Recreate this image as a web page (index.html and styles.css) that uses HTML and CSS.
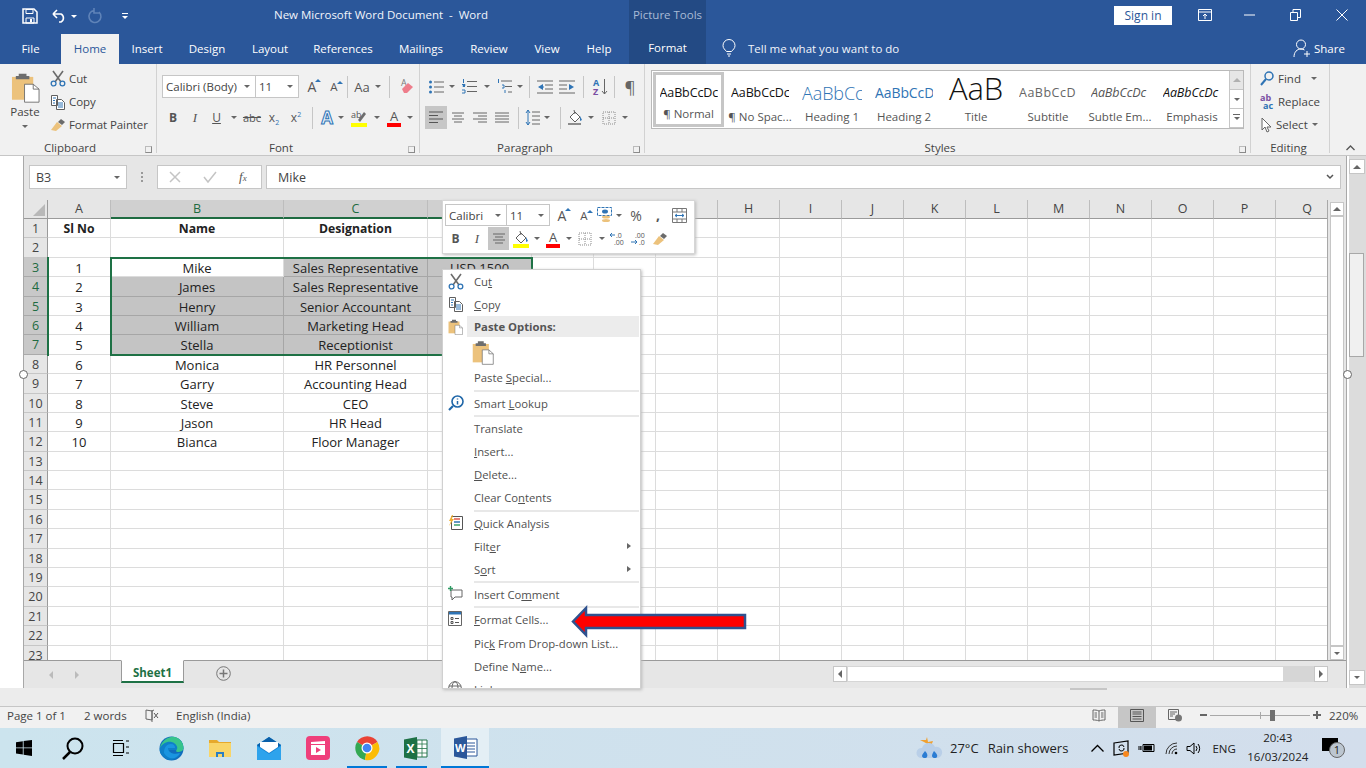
FILE: index.html
```html
<!doctype html>
<html>
<head>
  <meta charset="utf-8">
  <title>New Microsoft Word Document - Word</title>
  <link rel="stylesheet" href="styles.css">
</head>
<body>
<svg class="defs" width="0" height="0">
  <symbol id="paste" viewBox="0 0 30 38" preserveAspectRatio="none">
    <path d="M1 6h22v28H1z" fill="#ecc27c"/><path d="M8 5V2h8v3h3v4H5V5z" fill="#6d6d6d"/>
    <path d="M14 15h9l6 6v16H14z" fill="#fff" stroke="#6b6b6b"/><path d="M23 15v6h6" fill="none" stroke="#6b6b6b"/>
  </symbol>
  <symbol id="scissors" viewBox="0 0 16 17">
    <path d="M3 1l8 11M13 1L5 12" stroke="#6b6b6b" stroke-width="1.6" fill="none"/>
    <circle cx="3.6" cy="13.5" r="2.4" fill="none" stroke="#2f74b5" stroke-width="1.3"/><circle cx="12.4" cy="13.5" r="2.4" fill="none" stroke="#2f74b5" stroke-width="1.3"/>
  </symbol>
  <symbol id="copy" viewBox="0 0 16 16">
    <path d="M1.5 1.5h6v10h-6zM6.500 5.500h5l3 3v7h-8z" fill="#fff" stroke="#5f5f5f"/>
    <path d="M3 4h3M3 6.500h2M3 9h2M8 9h5M8 11h5M8 13h5" stroke="#2f74b5"/>
  </symbol>
  <symbol id="painter" viewBox="0 0 16 14">
    <path d="M1 12L7 4l5 4-6 5z" fill="#ecc27c"/><path d="M8 4l3-3 4 3-3 3z" fill="#6b6b6b"/>
  </symbol>
  <symbol id="fill" viewBox="0 0 16 18">
    <path d="M3 8l5-5 5 5-5 5z" fill="#fff" stroke="#5f5f5f"/><path d="M7 1l1 4" stroke="#5f5f5f"/><path d="M13 7l2 4-2 1z" fill="#2f74b5"/>
    <path d="M1 15h13" stroke="#8c8c8c" stroke-width="2"/>
  </symbol>
  <symbol id="borders" viewBox="0 0 14 14">
    <path d="M1 1h12v12H1zM7 1v12M1 7h12" fill="none" stroke="#8c8c8c" stroke-dasharray="1 1"/>
  </symbol>
  <symbol id="center" viewBox="0 0 14 12">
    <path d="M1 1h12M3 4h8M1 7h12M3 10h8" stroke="#666" fill="none"/>
  </symbol>
</svg>

<div class="screen">
  <header class="titlebar">
    <div class="qat">
      <svg width="16" height="16" viewBox="0 0 16 16"><path d="M1 1h11l3 3v11H1z" fill="none" stroke="#fff" stroke-width="1.500"/><path d="M4 1.500h7v4H4zM4 10h8v5H4z" fill="none" stroke="#fff"/><path d="M8 11h2v3H8z" fill="#fff"/></svg>
      <svg class="undo" width="15" height="14" viewBox="0 0 15 14"><path d="M1 5l4-4M1 5l4 4M1 5h8a4.500 4.500 0 0 1 0 8H7" fill="none" stroke="#fff" stroke-width="1.600"/></svg>
      <i class="v white undoarrow"></i>
      <svg class="redo" width="14" height="16" viewBox="0 0 14 16"><path d="M11 4a6 6 0 1 1-5-1.500M6 0v5h5" fill="none" stroke="#5f83b8" stroke-width="1.600"/></svg>
      <span class="customize"><b></b><i class="v white"></i></span>
    </div>
    <div class="doctitle">New Microsoft Word Document &nbsp;-&nbsp; Word</div>
    <div class="picturetools">Picture Tools</div>
    <div class="winbtns">
      <button class="signin">Sign in</button>
      <svg class="ribbonopt" width="14" height="12" viewBox="0 0 14 12"><path d="M.5.500h13v11H.5zM.5 3h13M7 10V5M5 7l2-2 2 2" fill="none" stroke="#fff"/></svg>
      <svg class="minbtn" width="11" height="2" viewBox="0 0 11 2"><path d="M0 1h11" stroke="#fff"/></svg>
      <svg class="maxbtn" width="11" height="12" viewBox="0 0 11 12"><path d="M.5 3.500h7v8h-7zM3 3V.5h7.500v8H8" fill="none" stroke="#fff"/></svg>
      <svg class="closebtn" width="12" height="12" viewBox="0 0 12 12"><path d="M.5.500l11 11M11.500.500l-11 11" stroke="#fff"/></svg>
    </div>
  </header>

  <nav class="tabs">
    <span>File</span><span class="current">Home</span><span>Insert</span><span>Design</span><span>Layout</span><span>References</span><span>Mailings</span><span>Review</span><span>View</span><span>Help</span><span></span><span class="formattab">Format</span>
    <span class="tellme">
      <svg width="14" height="18" viewBox="0 0 14 18"><path d="M4.500 12.500C3 10.500 1 9.500 1 6.500a6 6 0 0 1 12 0c0 3-2 4-3.500 6zM5 15h4M6 17h2" fill="none" stroke="#fff"/></svg>
      Tell me what you want to do
    </span>
    <span class="share">
      <svg width="18" height="19" viewBox="0 0 18 19"><circle cx="8" cy="5.500" r="4.500" fill="none" stroke="#fff"/><path d="M1 18c0-5 3-8 7-8 1.500 0 2.500.5 3.500 1M14 12v6M11 15h6" fill="none" stroke="#fff"/></svg>
      Share
    </span>
  </nav>

  <section class="ribbon">
    <div class="group clipboard">
      <div class="clipbody">
        <div class="pastebtn">
          <svg width="29" height="31"><use href="#paste"/></svg>
          <span>Paste</span>
          <i class="v"></i>
        </div>
        <div class="cliplist">
          <div><svg width="16" height="17"><use href="#scissors"/></svg>Cut</div>
          <div><svg width="16" height="16"><use href="#copy"/></svg>Copy</div>
          <div><svg width="16" height="14"><use href="#painter"/></svg>Format Painter</div>
        </div>
      </div>
      <div class="grouplabel">Clipboard<i class="launcher"></i></div>
    </div>

    <div class="group font">
      <div class="rows">
        <div class="row fontrow1">
          <div class="combo">Calibri (Body)<i class="v"></i></div>
          <div class="combo size">11<i class="v"></i></div>
          <span class="bigA up">A</span>
          <span class="bigA small up">A</span>
          <i class="sep"></i>
          <span class="aa">Aa</span>
          <i class="v"></i>
          <i class="sep"></i>
          <svg width="15" height="17" viewBox="0 0 15 17"><text x="2" y="8" font-size="9" fill="#777" font-family="Open Sans">A</text><path d="M3 11l6-6 5 4-6 6H5z" fill="#ee7d8b"/></svg>
        </div>
        <div class="row fontrow2">
          <b class="fmt">B</b>
          <em class="fmt">I</em>
          <u class="fmt">U</u>
          <i class="v"></i>
          <s class="fmt abc">abc</s>
          <span class="fmt">x<sub>2</sub></span>
          <span class="fmt">x<sup>2</sup></span>
          <i class="sep"></i>
          <span class="texteffect">A</span>
          <i class="v"></i>
          <svg width="16" height="18" viewBox="0 0 16 18"><text x="0" y="9" font-size="9" fill="#555" font-family="Open Sans">ab</text><path d="M7 11l6-8 2 2-6 8z" fill="#6d6d6d"/><path d="M0 14h16v4H0z" fill="#ff0"/></svg>
          <i class="v"></i>
          <span class="fontcolor">A</span>
          <i class="v"></i>
        </div>
      </div>
      <div class="grouplabel">Font<i class="launcher"></i></div>
    </div>

    <div class="group paragraph">
      <div class="rows">
        <div class="row pararow1">
          <svg width="15" height="14" viewBox="0 0 15 14"><path d="M5 2h10M5 7h10M5 12h10" stroke="#666"/><circle cx="1.500" cy="2" r="1.500" fill="#2f74b5"/><circle cx="1.500" cy="7" r="1.500" fill="#2f74b5"/><circle cx="1.500" cy="12" r="1.500" fill="#2f74b5"/></svg>
          <i class="v"></i>
          <svg width="15" height="15" viewBox="0 0 15 15"><path d="M5 2.500h10M5 7.500h10M5 12.500h10" stroke="#666"/><path d="M1.500 0v4M0 5.500h3v1H1v1h2M0 11h3v3H0" stroke="#2f74b5" fill="none"/></svg>
          <i class="v"></i>
          <svg width="15" height="15" viewBox="0 0 15 15"><path d="M4 2h11M8 7.500h7M11 13h4" stroke="#666"/><path d="M1.500 0v4M5 6h2v3H5M8 11v3" stroke="#2f74b5" fill="none"/></svg>
          <i class="v"></i>
          <i class="sep"></i>
          <svg width="16" height="14" viewBox="0 0 16 14"><path d="M0 1h16M8 5h8M8 9h8M0 13h16" stroke="#666"/><path d="M6 4L1 7l5 3zM6 6.500h1v1H6z" fill="#2f74b5"/></svg>
          <svg width="16" height="14" viewBox="0 0 16 14"><path d="M0 1h16M0 5h8M0 9h8M0 13h16" stroke="#666"/><path d="M10 4l5 3-5 3z" fill="#2f74b5"/></svg>
          <i class="sep"></i>
          <svg width="15" height="18" viewBox="0 0 15 18"><text x="0" y="8" font-size="9" font-weight="700" fill="#2f74b5" font-family="Open Sans">A</text><text x="0" y="17" font-size="9" font-weight="700" fill="#7a4fa3" font-family="Open Sans">Z</text><path d="M11.500 1v15M9 13l2.500 3 2.500-3" stroke="#666" fill="none"/></svg>
          <i class="sep"></i>
          <span class="pilcrow">&para;</span>
        </div>
        <div class="row pararow2">
          <svg class="activebtn" width="22" height="23" viewBox="0 0 22 23"><path d="M4 6h14M4 9.500h9M4 13h14M4 16.500h9" stroke="#555"/></svg>
          <svg width="14" height="12"><use href="#center"/></svg>
          <svg width="14" height="12" viewBox="0 0 14 12"><path d="M0 1h14M5 4h9M0 7h14M5 10h9" stroke="#666"/></svg>
          <svg width="14" height="12" viewBox="0 0 14 12"><path d="M0 1h14M0 4h14M0 7h14M0 10h14" stroke="#666"/></svg>
          <i class="sep"></i>
          <svg width="15" height="17" viewBox="0 0 15 17"><path d="M3 1v15M1 4l2-3 2 3M1 13l2 3 2-3" stroke="#2f74b5" fill="none"/><path d="M7 3h8M7 7h8M7 11h8M7 15h8" stroke="#666"/></svg>
          <i class="v"></i>
          <i class="sep"></i>
          <svg width="16" height="18"><use href="#fill"/></svg>
          <i class="v"></i>
          <svg width="14" height="14"><use href="#borders"/></svg>
          <i class="v"></i>
        </div>
      </div>
      <div class="grouplabel">Paragraph<i class="launcher"></i></div>
    </div>

    <div class="group styles">
      <div class="gallery">
        <div class="style selected"><p class="pv normal">AaBbCcDc</p><span>&para; Normal</span></div>
        <div class="style"><p class="pv normal">AaBbCcDc</p><span>&para; No Spac...</span></div>
        <div class="style"><p class="pv h1">AaBbCc</p><span>Heading 1</span></div>
        <div class="style"><p class="pv h2">AaBbCcD</p><span>Heading 2</span></div>
        <div class="style"><p class="pv titlepv">AaB</p><span>Title</span></div>
        <div class="style"><p class="pv subtitle">AaBbCcD</p><span>Subtitle</span></div>
        <div class="style"><p class="pv subtle">AaBbCcDc</p><span>Subtle Em...</span></div>
        <div class="style"><p class="pv emph">AaBbCcDc</p><span>Emphasis</span></div>
        <div class="galleryscroll">
          <div class="gup"><i class="vu"></i></div>
          <div><i class="v"></i></div>
          <div class="gmore"><i class="v"></i></div>
        </div>
      </div>
      <div class="grouplabel">Styles<i class="launcher"></i></div>
    </div>

    <div class="group editing">
      <div class="editlist">
        <div><svg width="14" height="15" viewBox="0 0 14 15"><circle cx="9" cy="5" r="4" fill="none" stroke="#2f74b5" stroke-width="1.500"/><path d="M6 8l-5 6" stroke="#2f74b5" stroke-width="2"/></svg>Find<i class="v"></i></div>
        <div><svg width="14" height="16" viewBox="0 0 14 16"><text x="0" y="7" font-size="9" font-weight="700" fill="#7a4fa3" font-family="Open Sans">ab</text><text x="3" y="15" font-size="9" font-weight="700" fill="#2f74b5" font-family="Open Sans">ac</text></svg>Replace</div>
        <div><svg width="12" height="16" viewBox="0 0 12 16"><path d="M2 1v12l3-3 2 5 2-1-2-4h4z" fill="#fff" stroke="#666"/></svg>Select<i class="v"></i></div>
      </div>
      <div class="grouplabel">Editing</div>
    </div>
    <svg class="collapse" width="9" height="6" viewBox="0 0 9 6"><path d="M.5 5l4-4 4 4" fill="none" stroke="#555" stroke-width="1.300"/></svg>
  </section>

  <main class="docarea">
    <div class="docrow">
      <div class="pagemargin"></div>
      <div class="excel">
        <div class="formulabar">
          <div class="namebox">B3<i class="v"></i></div>
          <span class="grip"></span>
          <div class="fxbox">
            <svg width="12" height="12" viewBox="0 0 12 12"><path d="M1 1l10 10M11 1L1 11" stroke="#c4c4c4" stroke-width="1.500"/></svg>
            <svg width="14" height="12" viewBox="0 0 14 12"><path d="M1 6l4 5 8-10" fill="none" stroke="#c4c4c4" stroke-width="1.500"/></svg>
            <em class="fx">f<small>x</small></em>
          </div>
          <div class="formula">Mike<svg width="8" height="6" viewBox="0 0 8 6"><path d="M1 1l3 3 3-3" fill="none" stroke="#555" stroke-width="1.500"/></svg></div>
        </div>

        <div class="sheetwrap">
          <div class="sheet">
            <div class="corner"><b></b></div><div class="ch">A</div><div class="ch on">B</div><div class="ch on">C</div><div class="ch on">D</div><div class="ch">E</div><div class="ch">F</div><div class="ch">G</div><div class="ch">H</div><div class="ch">I</div><div class="ch">J</div><div class="ch">K</div><div class="ch">L</div><div class="ch">M</div><div class="ch">N</div><div class="ch">O</div><div class="ch">P</div><div class="ch q">Q</div>

            <div class="rh">1</div><div class="c hd">Sl No</div><div class="c hd">Name</div><div class="c hd">Designation</div><div class="c"></div>
            <div class="rh">2</div><div class="c"></div><div class="c"></div><div class="c"></div><div class="c"></div>
            <div class="rh on">3</div><div class="c">1</div><div class="c">Mike</div><div class="c sel">Sales Representative</div><div class="c sel">USD 1500</div>
            <div class="rh on">4</div><div class="c">2</div><div class="c sel">James</div><div class="c sel">Sales Representative</div><div class="c sel"></div>
            <div class="rh on">5</div><div class="c">3</div><div class="c sel">Henry</div><div class="c sel">Senior Accountant</div><div class="c sel"></div>
            <div class="rh on">6</div><div class="c">4</div><div class="c sel">William</div><div class="c sel">Marketing Head</div><div class="c sel"></div>
            <div class="rh on">7</div><div class="c">5</div><div class="c sel">Stella</div><div class="c sel">Receptionist</div><div class="c sel"></div>
            <div class="rh">8</div><div class="c">6</div><div class="c">Monica</div><div class="c">HR Personnel</div><div class="c"></div>
            <div class="rh">9</div><div class="c">7</div><div class="c">Garry</div><div class="c">Accounting Head</div><div class="c"></div>
            <div class="rh">10</div><div class="c">8</div><div class="c">Steve</div><div class="c">CEO</div><div class="c"></div>
            <div class="rh">11</div><div class="c">9</div><div class="c">Jason</div><div class="c">HR Head</div><div class="c"></div>
            <div class="rh">12</div><div class="c">10</div><div class="c">Bianca</div><div class="c">Floor Manager</div><div class="c"></div>
            <div class="rh">13</div><div class="c"></div><div class="c"></div><div class="c"></div><div class="c"></div>
            <div class="rh">14</div><div class="c"></div><div class="c"></div><div class="c"></div><div class="c"></div>
            <div class="rh">15</div><div class="c"></div><div class="c"></div><div class="c"></div><div class="c"></div>
            <div class="rh">16</div><div class="c"></div><div class="c"></div><div class="c"></div><div class="c"></div>
            <div class="rh">17</div><div class="c"></div><div class="c"></div><div class="c"></div><div class="c"></div>
            <div class="rh">18</div><div class="c"></div><div class="c"></div><div class="c"></div><div class="c"></div>
            <div class="rh">19</div><div class="c"></div><div class="c"></div><div class="c"></div><div class="c"></div>
            <div class="rh">20</div><div class="c"></div><div class="c"></div><div class="c"></div><div class="c"></div>
            <div class="rh">21</div><div class="c"></div><div class="c"></div><div class="c"></div><div class="c"></div>
            <div class="rh">22</div><div class="c"></div><div class="c"></div><div class="c"></div><div class="c"></div>
            <div class="rh">23</div><div class="c"></div><div class="c"></div><div class="c"></div><div class="c"></div>
            <div class="selection"></div>
            <div class="rowmark"></div>
          </div>
          <div class="sheetscroll">
            <div class="arrowbtn"><i class="vu"></i></div>
            <div class="sheettrack"></div>
            <div class="arrowbtn"><i class="v"></i></div>
          </div>
        </div>

        <div class="sheettabs">
          <span class="navarrows"><i class="tl"></i><i class="tr"></i></span>
          <div class="sheettab">Sheet1</div>
          <svg class="addsheet" width="15" height="15" viewBox="0 0 15 15"><circle cx="7.500" cy="7.500" r="6.800" fill="none" stroke="#777"/><path d="M7.500 3.500v8M3.500 7.500h8" stroke="#777" stroke-width="1.500"/></svg>
          <div class="hscroll">
            <div class="arrowbtn"><i class="tl"></i></div>
            <div class="hthumb"></div>
            <div class="arrowbtn"><i class="tr"></i></div>
          </div>
        </div>
      </div>
      <div class="wordscroll">
        <div class="arrowbtn"><i class="vu"></i></div>
        <div class="wordtrack"><div class="wordthumb"></div></div>
        <div class="arrowbtn"><i class="v"></i></div>
      </div>
    </div>
    <div class="docfoot"><span></span></div>
  </main>

  <footer class="statusbar">
    <span class="pageinfo">Page 1 of 1</span>
    <span class="wordcount">2 words</span>
    <svg class="proof" width="14" height="13" viewBox="0 0 14 13"><path d="M7 11L1 10V1l6 1zM7 2l2-1M7 13V1" fill="none" stroke="#666"/><path d="M9 4l4 5M13 4L9 9" stroke="#555"/></svg>
    <span class="lang">English (India)</span>
    <div class="statusright">
      <svg width="14" height="13" viewBox="0 0 14 13"><path d="M7 2C5 1 3 1 1 1v10c2 0 4 0 6 1 2-1 4-1 6-1V1c-2 0-4 0-6 1zM7 2v10M2.500 4H5M2.500 6H5M2.500 8H5M9 4h2.500M9 6h2.500M9 8h2.500" fill="none" stroke="#666"/></svg>
      <span class="printview"><svg width="14" height="13" viewBox="0 0 14 13"><path d="M.5.500h13v12H.5zM2.500 3h9M2.500 5h9M2.500 7.500h9M2.500 10h9" fill="none" stroke="#555"/></svg></span>
      <svg width="14" height="13" viewBox="0 0 14 13"><path d="M.5.500h10v10H.5zM2 3h7M2 5h5M2 7h3" fill="none" stroke="#666"/><circle cx="10.500" cy="9" r="3.500" fill="#777"/></svg>
      <div class="zoomslider"><span class="minus"></span><div class="ztrack"><b></b><i></i></div><span class="plus"></span></div>
      <span class="zoomval">220%</span>
    </div>
  </footer>

  <footer class="taskbar">
    <div class="tasks">
      <svg class="start" width="16" height="16" viewBox="0 0 16 16"><path d="M0 2.200l6.800-1v6.200H0zM7.600 1l8.400-1v7.400H7.600zM0 8.200h6.800v6.400L0 13.600zM7.600 8.200H16V16l-8.400-1.200z" fill="#000"/></svg>
      <svg class="search" width="22" height="23" viewBox="0 0 22 23"><circle cx="13" cy="9" r="7.500" fill="none" stroke="#000" stroke-width="2"/><path d="M8 15l-7 7" stroke="#000" stroke-width="2.500"/></svg>
      <svg class="taskview" width="16" height="16" viewBox="0 0 16 16"><path d="M.5 3.500h10v9H.5zM0 .5h10M0 15.500h10M13 1h3M13 7h3M13 13h3" fill="none" stroke="#000" stroke-width="1.200"/></svg>
      <svg class="app edge" width="25" height="25" viewBox="0 0 25 25"><circle cx="12.500" cy="12.500" r="12" fill="#0f6cbd"/><path d="M1 12C3 3 12 0 18 2c5 2 7 7 6 12H10c1 4 7 5 12 3-3 6-11 9-16 5-4-3-6-6-5-10z" fill="#0f7fc8"/><path d="M12 1c6-1 12 3 12.500 11 0 3-3 4-6 4-1 0-2-1-1-2 2-2 0-7-5-8C8 5 3 8 1 12 2 6 7 2 12 1z" fill="#37c48c"/><path d="M5 17c0-6 3-9 7-9 3 0 4 2 4 4H9c0 5 6 7 12 5-3 6-11 8-16 0z" fill="#1a95e0"/></svg>
      <svg class="app folder" width="22" height="18" viewBox="0 0 22 18"><path d="M0 1h8l2 2h12v4H0z" fill="#e6a92b"/><path d="M0 4h22v14H0z" fill="#f8d568"/><path d="M7 13h8v5h-2v-3H9v3H7z" fill="#2a7fc4"/></svg>
      <svg class="app mail" width="24" height="23" viewBox="0 0 24 23"><path d="M0 8l12-8 12 8v15H0z" fill="#1284d6"/><path d="M0 8l12-8 12 8-12 8z" fill="#0a5fa8"/><path d="M3 5h18v5l-9 6-9-6z" fill="#fff"/><path d="M0 9l12 8 12-8v14H0z" fill="#2ea3ec"/></svg>
      <svg class="app clip" width="24" height="24" viewBox="0 0 24 24"><rect width="24" height="24" rx="4" fill="#ef3f7b"/><path d="M5 9h14v10H5z" fill="#fff"/><path d="M5 6l14-1v3H5z" fill="#fff"/><path d="M10 11l5 3-5 3z" fill="#ef3f7b"/></svg>
      <svg class="app chrome" width="24" height="24" viewBox="0 0 24 24"><path d="M12 12L2 6a12 12 0 0 1 20.500 0z" fill="#ea4335"/><path d="M12 12L2 6a12 12 0 0 0 8 18z" fill="#34a853"/><path d="M12 12l10.500-6A12 12 0 0 1 10 24z" fill="#fbbc05"/><circle cx="12" cy="12" r="5.500" fill="#fff"/><circle cx="12" cy="12" r="4.300" fill="#4285f4"/></svg>
      <svg class="app excelicon" width="23" height="23" viewBox="0 0 23 23"><path d="M9 3h14v17H9z" fill="#fff" stroke="#217346"/><path d="M13 3v17M18 3v17M9 7h14M9 11.500h14M9 16h14" stroke="#217346" stroke-width=".8"/><path d="M0 2.500L13 0v23L0 20.500z" fill="#1e7145"/><text x="2.500" y="16" font-size="12" font-weight="700" fill="#fff" font-family="Open Sans">X</text></svg>
      <span class="wordtask"><svg width="23" height="23" viewBox="0 0 23 23"><path d="M9 3h14v17H9z" fill="#fff" stroke="#2b579a"/><path d="M13 7h8M13 10h8M13 13h8M13 16h8" stroke="#2b579a"/><path d="M0 2.500L13 0v23L0 20.500z" fill="#2b579a"/><text x="1" y="16" font-size="11" font-weight="700" fill="#fff" font-family="Open Sans">W</text></svg></span>
    </div>
    <span class="runbar chromerun"></span>
    <span class="runbar excelrun"></span>
    <div class="tray">
      <svg class="weather" width="24" height="24" viewBox="0 0 24 24"><path d="M9 1l1 5 5-1-2 5-7-4-4-2 6 0z" fill="#f0a030"/><path d="M3 22a5 5 0 0 1 1-10 7 7 0 0 1 13-1 5.500 5.500 0 0 1 3 11z" fill="#b9cfe8"/><path d="M7 15c2 2 3 4 2 6-1 2-5 1-5-1 0-2 2-3 3-5zM16 15c2 2 4 4 3 6-1 2-5 1-5-1 0-2 1-3 2-5z" fill="#2b7cd3"/></svg>
      <span class="temp">27°C</span>
      <span class="cond">Rain showers</span>
      <svg class="chev" width="13" height="8" viewBox="0 0 13 8"><path d="M.5 7.500l6-6 6 6" fill="none" stroke="#000" stroke-width="1.300"/></svg>
      <svg class="meet" width="18" height="17" viewBox="0 0 18 17"><path d="M1 3l14-2v12L1 15z" fill="none" stroke="#000" stroke-width="1.200"/><path d="M6 8a2.500 2.500 0 0 1 5-1M11 8a2.500 2.500 0 0 1-5 1" fill="none" stroke="#000"/><circle cx="13" cy="14" r="3" fill="#f7871d"/></svg>
      <svg class="batt" width="17" height="10" viewBox="0 0 17 10"><path d="M5 1.500h11v7H5zM3 3v4M0 4h3M0 6h3" fill="none" stroke="#000"/><path d="M6 2.500h8v5H6z" fill="#000"/></svg>
      <svg class="wifi" width="14" height="13" viewBox="0 0 14 13"><path d="M1 12a11 11 0 0 1 11-11M4 12a8 8 0 0 1 8-8M7 12a5 5 0 0 1 5-5" fill="none" stroke="#333"/><circle cx="11" cy="11" r="1.300" fill="#000"/></svg>
      <svg class="vol" width="16" height="13" viewBox="0 0 16 13"><path d="M1 4.500h3L8 1v11L4 8.500H1z" fill="none" stroke="#000"/><path d="M10 4a4 4 0 0 1 0 5M12 2a7 7 0 0 1 0 9" fill="none" stroke="#000"/></svg>
      <span class="eng">ENG</span>
      <div class="clock"><span>20:43</span><span>16/03/2024</span></div>
      <span class="notify"><b></b><em>1</em></span>
    </div>
  </footer>

  <div class="handle hleft"></div>
  <div class="handle hright"></div>

  <div class="minibar">
    <div class="minirow mini1">
      <div class="combo">Calibri<i class="v"></i></div>
      <div class="combo size">11<i class="v"></i></div>
      <span class="bigA up">A</span>
      <span class="bigA small up">A</span>
      <svg width="15" height="16" viewBox="0 0 15 16"><path d="M.5.500h14v8H.5z" fill="none" stroke="#2f74b5" stroke-dasharray="3 1"/><ellipse cx="8" cy="4.500" rx="3" ry="2" fill="#2f74b5"/><ellipse cx="9" cy="10" rx="4" ry="1.500" fill="#ecc27c"/><ellipse cx="9" cy="13.500" rx="4" ry="1.500" fill="#ecc27c"/></svg>
      <i class="v"></i>
      <span class="pct">%</span>
      <span class="comma">,</span>
      <svg width="15" height="15" viewBox="0 0 15 15"><path d="M.5.500h14v14H.5zM.5 4h14M.5 11h14M5 .5V4M10 .5V4M5 11v3.500M10 11v3.500" fill="none" stroke="#777"/><path d="M3 7.500h9M3 7.500l2-1.500M3 7.500L5 9M12 7.500L10 6M12 7.500L10 9" fill="none" stroke="#2f74b5"/></svg>
    </div>
    <div class="minirow mini2">
      <b class="fmt">B</b>
      <em class="fmt">I</em>
      <span class="miniactive"><svg width="14" height="12"><use href="#center"/></svg></span>
      <svg class="minifill" width="16" height="18" viewBox="0 0 16 18"><path d="M3 8l5-5 5 5-5 5z" fill="#fff" stroke="#5f5f5f"/><path d="M7 1l1 4" stroke="#5f5f5f"/><path d="M13 7l2 4-2 1z" fill="#2f74b5"/><path d="M0 14h16v4H0z" fill="#ff0"/></svg>
      <i class="v"></i>
      <span class="fontcolor">A</span>
      <i class="v"></i>
      <svg width="14" height="14"><use href="#borders"/></svg>
      <i class="v"></i>
      <svg width="16" height="14" viewBox="0 0 16 14"><text x="6" y="6" font-size="7" fill="#555" font-family="Open Sans">.0</text><text x="4" y="13" font-size="7" fill="#555" font-family="Open Sans">.00</text><path d="M5 3H0M0 3l2-2M0 3l2 2" stroke="#2f74b5" fill="none"/></svg>
      <svg width="16" height="14" viewBox="0 0 16 14"><text x="4" y="6" font-size="7" fill="#555" font-family="Open Sans">.00</text><text x="8" y="13" font-size="7" fill="#555" font-family="Open Sans">.0</text><path d="M0 10h6M6 10l-2-2M6 10l-2 2" stroke="#2f74b5" fill="none"/></svg>
      <svg width="16" height="14"><use href="#painter"/></svg>
    </div>
  </div>

  <div class="ctxmenu">
    <div class="mi"><svg width="16" height="17"><use href="#scissors"/></svg><span>Cu<u>t</u></span></div>
    <div class="mi"><svg width="16" height="16"><use href="#copy"/></svg><span><u>C</u>opy</span></div>
    <div class="mi pastehead"><svg width="15" height="16"><use href="#paste"/></svg><span>Paste Options:</span></div>
    <div class="mi pastebig"><svg width="22" height="25"><use href="#paste"/></svg></div>
    <div class="mi"><span>Paste <u>S</u>pecial...</span></div>
    <hr>
    <div class="mi"><svg width="16" height="16" viewBox="0 0 16 16"><circle cx="9.500" cy="6.500" r="5.500" fill="none" stroke="#1f66a8" stroke-width="1.600"/><path d="M5 11l-4 4" stroke="#1f66a8" stroke-width="2.200"/><path d="M9.500 3.500v1M9.500 6v3.500" stroke="#1f66a8" stroke-width="1.500"/></svg><span>Smart <u>L</u>ookup</span></div>
    <hr>
    <div class="mi"><span>Translate</span></div>
    <div class="mi"><span><u>I</u>nsert...</span></div>
    <div class="mi"><span><u>D</u>elete...</span></div>
    <div class="mi"><span>Clear Co<u>n</u>tents</span></div>
    <hr>
    <div class="mi"><svg width="15" height="15" viewBox="0 0 15 15"><path d="M3.500 1.500h11v13h-11z" fill="#fff" stroke="#555"/><path d="M6 4h6" stroke="#e05a4e" stroke-width="1.500"/><path d="M6 7h6" stroke="#2f74b5" stroke-width="1.500"/><path d="M6 10h6" stroke="#3fa36b" stroke-width="1.500"/><path d="M4 0L1 6h2l-2 5 5-7H4l1-4z" fill="#f0b030"/></svg><span><u>Q</u>uick Analysis</span></div>
    <div class="mi sub"><span>Filt<u>e</u>r</span></div>
    <div class="mi sub"><span>S<u>o</u>rt</span></div>
    <hr>
    <div class="mi"><svg width="15" height="15" viewBox="0 0 15 15"><path d="M3 4h11v7H7l-3 3v-3H3z" fill="none" stroke="#666"/><path d="M2.500 0v5M0 2.500h5" stroke="#2e9a63" stroke-width="1.400"/></svg><span>Insert Co<u>m</u>ment</span></div>
    <hr>
    <div class="mi"><svg width="14" height="15" viewBox="0 0 14 15"><path d="M.5.500h13v14H.5z" fill="#fff" stroke="#666"/><path d="M1 1h12v2.500H1z" fill="#2f74b5"/><path d="M3 6.500h2v2H3zM3 10.500h2v2H3z" fill="none" stroke="#555"/><path d="M7 7.500h4M7 11.500h4" stroke="#555"/></svg><span><u>F</u>ormat Cells...</span></div>
    <div class="mi"><span>Pic<u>k</u> From Drop-down List...</span></div>
    <div class="mi"><span>Define N<u>a</u>me...</span></div>
    <div class="mi"><svg width="14" height="14" viewBox="0 0 14 14"><circle cx="7" cy="7" r="6.300" fill="none" stroke="#666"/><ellipse cx="7" cy="7" rx="3" ry="6.300" fill="none" stroke="#666"/><path d="M1 5h12M1 9h12" stroke="#666"/></svg><span><u>L</u>ink</span></div>
  </div>

  <svg class="redarrow" width="176" height="31" viewBox="0 0 176 31">
    <path d="M2 15.500L15 2v7h159v13H15v7z" fill="#f00" stroke="#2f528f" stroke-width="2.500"/>
  </svg>
</div>
</body>
</html>
```

FILE: styles.css
```css
* { box-sizing: border-box; }
html, body { margin: 0; height: 100%; }
body { overflow: hidden; background: #fff; color: #444; font: 11.5px "Open Sans", "Liberation Sans", sans-serif; }
p { margin: 0; }
svg { display: block; flex: none; overflow: visible; }
.defs { position: absolute; }
.screen { position: relative; width: 1366px; height: 768px; display: flex; flex-direction: column; overflow: hidden; }

/* small shared bits */
.v { display: block; width: 0; height: 0; border: 3px solid transparent; border-top: 3.500px solid #666; border-bottom: 0; justify-self: center; flex: none; }
.v.white { border-top-color: #fff; }
.vu { display: block; width: 0; height: 0; border: 4px solid transparent; border-bottom: 4px solid #666; border-top: 0; }
.tl { display: block; width: 0; height: 0; border: 4px solid transparent; border-right: 4px solid #666; border-left: 0; }
.tr { display: block; width: 0; height: 0; border: 4px solid transparent; border-left: 4px solid #666; border-right: 0; }
.sep { display: block; width: 1px; height: 22px; background: #c6c6c6; justify-self: center; }

/* title bar */
.titlebar { height: 32px; background: #2b579a; display: flex; color: #fff; flex: none; }
.qat { width: 274px; display: flex; align-items: center; padding: 0 0 0 22px; }
.undo { margin-left: 14px; }
.undoarrow { margin-left: 4px; }
.redo { margin-left: 11px; }
.customize { margin-left: 20px; display: flex; flex-direction: column; gap: 2px; }
.customize b { display: block; width: 6px; height: 1px; background: #fff; }
.doctitle { width: 355px; font-size: 11.500px; padding-top: 7px; color: #f2f5fa; }
.picturetools { width: 77px; background: #234a84; text-align: center; padding-top: 7px; color: #a9bbd6; }
.winbtns { flex: 1; position: relative; display: flex; align-items: center; padding-left: 408px; }
.signin { width: 58px; height: 19px; margin-top: -2px; border: 0; background: #fff; color: #2b579a; padding: 0; font: 12px "Open Sans", sans-serif; }
.ribbonopt { margin-left: 26px; margin-top: -2px; }
.minbtn { margin-left: 32px; margin-top: -2px; }
.maxbtn { margin-left: 35px; margin-top: -2px; }
.closebtn { margin-left: 35px; margin-top: -2px; }

/* tabs */
.tabs { height: 32px; flex: none; background: #2b579a; color: #fff; display: grid; grid-template-columns: 61px 58px 56px 64px 62px 84px 72px 64px 52px 52px 4px 77px 587px 1fr; align-items: center; text-align: center; }
.tabs .current { align-self: stretch; margin-top: 2px; background: #f1f1f1; color: #2b579a; line-height: 30px; }
.formattab { align-self: stretch; background: #234a84; line-height: 32px; }
.tellme { display: flex; align-items: center; gap: 12px; padding-left: 16px; color: #f2f5fa; }
.share { position: absolute; left: 1293px; top: 39px; display: flex; align-items: center; gap: 3px; }

/* ribbon */
.ribbon { height: 92px; flex: none; background: #f1f1f1; border-bottom: 1px solid #c6c6c6; display: flex; position: relative; }
.group { height: 89px; margin-bottom: 3px; border-right: 1px solid #d2d2d2; display: flex; flex-direction: column; }
.clipboard { width: 157px; }
.font { width: 263px; padding: 11px 0 0 5px; }
.paragraph { width: 225px; padding: 11px 0 0 5px; }
.styles { width: 606px; padding: 6px 0 0 6px; }
.editing { width: 79px; padding: 3px 0 0 9px; }
.grouplabel { height: 16px; margin-top: auto; margin-bottom: -3px; margin-left: -5px; padding-right: 14px; text-align: center; position: relative; line-height: 16px; color: #444; }
.clipboard .grouplabel { margin-left: 0; padding-right: 16px; }
.styles .grouplabel { padding-right: 16px; }
.editing .grouplabel { margin-left: -9px; padding-right: 3px; }
.launcher { position: absolute; right: 4px; bottom: 3px; width: 7px; height: 7px; border: 1px solid #8a8a8a; border-top-color: #bbb; border-left-color: #bbb; }
.collapse { position: absolute; left: 1346px; top: 81px; }

.clipbody { display: flex; padding-top: 6px; }
.pastebtn { width: 50px; display: flex; flex-direction: column; align-items: center; padding-left: 0; }
.pastebtn svg { margin-top: 2px; }
.pastebtn span { margin-top: 1px; }
.pastebtn .v { margin-top: 6px; }
.cliplist { display: flex; flex-direction: column; gap: 6px; }
.cliplist div { display: flex; align-items: center; gap: 3px; height: 17px; white-space: nowrap; letter-spacing: -.1px; }

.rows { display: flex; flex-direction: column; gap: 8px; }
.row { display: grid; height: 23px; align-items: center; justify-items: center; }
.fontrow1 { grid-template-columns: 94px 43px 26px 18px 8px 22px 10px 12px 22px; }
.fontrow2 { grid-template-columns: 22px 22px 21px 14px 22px 22px 22px 10px 20px 8px 28px 8px 26px 6px; }
.pararow1 { grid-template-columns: 22px 10px 24px 12px 22px 9px 10px 22px 22px 10px 24px 4px 28px; }
.pararow2 { grid-template-columns: 22px 22px 22px 22px 10px 18px 12px 14px 16px 16px 20px 12px; }
.activebtn { background: #c6c6c6; }
.combo { justify-self: stretch; align-self: stretch; background: #fff; border: 1px solid #c6c6c6; display: flex; align-items: center; justify-content: space-between; padding: 0 5px 0 3px; font-size: 11.500px; color: #444; white-space: nowrap; }
.combo.size { margin-left: -1px; color: #444; }
.bigA { font-size: 14px; color: #555; position: relative; }
.bigA.small { font-size: 11.500px; }
.bigA.up::after { content: ""; position: absolute; right: -5px; top: 2px; border: 3px solid transparent; border-bottom: 3.500px solid #2f74b5; border-top: 0; }
.aa { font-size: 13px; color: #555; }
.fmt { font-size: 12px; color: #555; font-style: normal; }
em.fmt { font-style: italic; font-family: "Liberation Serif", serif; font-size: 13px; }
b.fmt { font-weight: 700; }
.abc { font-size: 11px; }
.fmt sub, .fmt sup { font-size: 7px; color: #2f74b5; line-height: 0; }
.texteffect { font-size: 17px; font-weight: 700; color: #e8f1fa; -webkit-text-stroke: 1px #2f74b5; line-height: 18px; }
.fontcolor { width: 14px; height: 18px; font-size: 13px; line-height: 14px; text-align: center; color: #555; border-bottom: 4px solid #f00; }
.pilcrow { font-size: 17px; color: #666; }

/* styles gallery */
.gallery { width: 593px; height: 59px; background: #fff; border: 1px solid #b9b9b9; display: flex; padding: 1px; }
.style { width: 72px; height: 55px; flex: none; display: flex; flex-direction: column; align-items: center; overflow: hidden; padding: 3px 2px 0; }
.style span { margin-top: auto; padding-bottom: 3px; color: #555; white-space: nowrap; }
.style.selected { width: 71px; border: 3px solid #c6c6c6; padding-top: 0; }
.pv { width: 58px; height: 33px; line-height: 36px; overflow: hidden; white-space: nowrap; font-size: 12.500px; color: #111; text-align: left; letter-spacing: -.1px; }
.pv.h1 { font-size: 18px; color: #2f74b5; width: 60px; font-weight: 300; }
.pv.h2 { font-size: 14px; color: #2f74b5; width: 58px; }
.pv.titlepv { font-size: 31px; color: #111; text-align: center; line-height: 26px; font-weight: 300; }
.pv.subtitle { color: #666; letter-spacing: .5px; }
.pv.subtle { font-style: italic; color: #555; }
.pv.emph { font-style: italic; color: #111; }
.galleryscroll { margin-left: auto; margin-right: -1px; width: 14px; display: flex; flex-direction: column; margin-top: -1px; margin-bottom: -1px; border-left: 1px solid #c6c6c6; }
.galleryscroll div { flex: 1; display: flex; align-items: center; justify-content: center; border-bottom: 1px solid #c6c6c6; }
.galleryscroll .gup { background: #e6e6e6; }
.galleryscroll .gup .vu { border-bottom-color: #b0b0b0; }
.gmore { position: relative; }
.gmore::before { content: ""; position: absolute; left: 3px; top: 5px; width: 7px; height: 1px; background: #666; }
.editlist { display: flex; flex-direction: column; gap: 6px; margin-left: 0; padding-top: 3px; }
.editlist div { display: flex; align-items: center; gap: 4px; height: 17px; white-space: nowrap; }
.editlist .v { margin-left: 6px; }
.editlist div:last-child .v { margin-left: 0; }

/* document area */
.docarea { flex: 1; min-height: 0; display: flex; flex-direction: column; background: #e9e9e9; }
.docrow { height: 532px; flex: none; display: flex; background: #fff; }
.docfoot { flex: 1; background: #ececec; border-bottom: 1px solid #c6c6c6; position: relative; }
.docfoot span { position: absolute; left: 1070px; top: 0; width: 37px; height: 2px; background: #c6c6c6; }
.pagemargin { width: 24px; flex: none; border-right: 1px solid #a8a8a8; }
.excel { width: 1323px; flex: none; background: #e6e6e6; display: flex; flex-direction: column; border-right: 1px solid #a8a8a8; }

.formulabar { height: 44px; flex: none; display: flex; align-items: flex-start; padding: 9px 5px 0; color: #444; }
.namebox { width: 98px; height: 24px; background: #fff; border: 1px solid #c6c6c6; display: flex; align-items: center; justify-content: space-between; padding: 0 6px; font-size: 12.500px; }
.grip { width: 2px; height: 10px; margin: 7px 14px 0 14px; border-left: 2px dotted #999; }
.fxbox { width: 105px; height: 24px; background: #fff; border: 1px solid #c6c6c6; display: flex; align-items: center; gap: 22px; padding: 0 11px; }
.fx { font: italic 13px "Liberation Serif", serif; color: #555; }
.fx small { font-size: 9px; }
.formula { width: 1075px; height: 24px; margin-left: 4px; background: #fff; border: 1px solid #c6c6c6; display: flex; align-items: center; justify-content: space-between; padding: 0 6px 0 11px; font-size: 12.500px; }

.sheetwrap { height: 460px; flex: none; display: flex; }
.sheet { position: relative; width: 1304px; height: 460px; overflow: hidden; display: grid;
  grid-template-columns: 24px 63px 173px 144px 104px repeat(12, 62px) 52px;
  grid-template-rows: 19px repeat(23, 19.400px);
  background:
    repeating-linear-gradient(to bottom, transparent 0 18.400px, #dcdcdc 18.400px 19.400px) 0 19px,
    repeating-linear-gradient(to right, transparent 0 61px, #dcdcdc 61px 62px) 508px 0,
    #fff; border-right: 1px solid #a8a8a8; font-size: 13px; color: #222; }
.ch { font-size: 12.500px; background: #e6e6e6; border-right: 1px solid #bdbdbd; border-bottom: 1px solid #9a9a9a; text-align: center; line-height: 18px; color: #444; }
.ch.on { background: #d0d0d0; color: #1e6b41; border-bottom: 2px solid #1e6b41; }
.ch.q { padding-left: 10px; border-right: 0; }
.corner { background: #e6e6e6; border-right: 1px solid #9a9a9a; border-bottom: 1px solid #9a9a9a; position: relative; }
.corner b { position: absolute; right: 2px; bottom: 2px; border: 6px solid transparent; border-right-color: #b8b8b8; border-bottom-color: #b8b8b8; }
.rh { grid-column: 1; font-size: 12.500px; background: #e6e6e6; border-right: 1px solid #9a9a9a; border-bottom: 1px solid #c6c6c6; text-align: center; line-height: 19px; color: #444; }
.rh.on { background: #c8c8c8; color: #1e6b41; border-bottom-color: #aaa; }
.c { background: #fff; border-right: 1px solid #dcdcdc; border-bottom: 1px solid #dcdcdc; padding-top: 1px; text-align: center; line-height: 18.400px; white-space: nowrap; overflow: hidden; }
.c.hd { font-size: 12.200px; font-weight: 700; color: #222; }
.c.sel { background: #c4c4c4; border-color: #a6a6a6; }
.selection { position: absolute; left: 86px; top: 57px; width: 423px; height: 99px; border: 2px solid #1e7145; }
.rowmark { position: absolute; left: 23px; top: 57px; width: 2px; height: 99px; background: #1e7145; }

.sheetscroll { width: 14px; margin-left: 2px; margin-top: 2px; display: flex; flex-direction: column; background: #c6c6c6; }
.sheettrack { flex: 1; background: #fff; margin: 1px; }
.arrowbtn { width: 14px; height: 14px; flex: none; background: #fff; border: 1px solid #c6c6c6; display: flex; align-items: center; justify-content: center; }

.sheettabs { flex: 1; display: flex; align-items: flex-start; border-top: 1px solid #9a9a9a; position: relative; }
.navarrows { width: 97px; display: flex; gap: 22px; padding: 10px 0 0 25px; }
.navarrows i { border-left-color: #bbb; border-right-color: #bbb; }
.sheettab { width: 63px; height: 23px; margin-top: -1px; background: #fff; border: 1px solid #9a9a9a; border-top-color: #fff; border-bottom: 2px solid #1e7145; text-align: center; line-height: 24px; font-weight: 700; color: #1e7145; }
.addsheet { margin: 5px 0 0 32px; }
.hscroll { position: absolute; left: 809px; top: 5px; width: 495px; height: 16px; display: flex; align-items: stretch; background: #d6d6d6; }
.hscroll .arrowbtn { height: 16px; }
.hthumb { width: 435px; margin: 1px 0 1px 1px; background: #fff; margin-right: auto; }

.wordscroll { flex: 1; margin-left: 2px; background: #dcdcdc; display: flex; flex-direction: column; padding: 3px 0 3px 0; }
.wordscroll .arrowbtn { width: 16px; height: 15px; }
.wordtrack { flex: 1; }
.wordthumb { width: 15px; height: 104px; margin-top: 79px; background: #f0f0f0; border: 1px solid #a8a8a8; }

/* status bar */
.statusbar { height: 21px; flex: none; background: #f1f1f1; display: flex; align-items: center; padding-bottom: 5px; color: #444; position: relative; }
.pageinfo { margin-left: 7px; width: 77px; }
.wordcount { width: 61px; }
.proof { margin-right: 17px; }
.statusright { position: absolute; left: 1092px; top: 0; height: 21px; display: flex; align-items: center; padding-bottom: 5px; }
.printview { width: 38px; height: 21px; margin-top: 5px; margin-left: 12px; background: #c6c6c6; display: flex; align-items: center; justify-content: center; margin-right: 12px; padding-bottom: 5px; }
.zoomslider { display: flex; align-items: center; margin-left: 18px; width: 122px; }
.minus { width: 7px; height: 2px; background: #666; }
.plus { width: 8px; height: 8px; background: linear-gradient(#666,#666) center/8px 2px no-repeat, linear-gradient(#666,#666) center/2px 8px no-repeat; }
.ztrack { position: relative; width: 100px; height: 1px; margin: 0 3px; background: #a8a8a8; }
.ztrack b { position: absolute; left: 50px; top: -3px; width: 1px; height: 7px; background: #a8a8a8; }
.ztrack i { position: absolute; left: 60px; top: -5px; width: 5px; height: 11px; background: #707070; }
.zoomval { margin-left: 7px; }

/* windows taskbar */
.taskbar { height: 40px; flex: none; background: linear-gradient(to right, #cce4ee, #d3deec); display: flex; color: #111; position: relative; }
.tasks { display: flex; align-items: center; }
.start { margin-left: 16px; }
.search { margin-left: 30px; }
.taskview { margin-left: 29px; }
.edge { margin-left: 30px; }
.folder { margin-left: 25px; }
.mail { margin-left: 26px; }
.clip { margin-left: 25px; }
.chrome { margin-left: 25px; }
.excelicon { margin-left: 25px; }
.wordtask { width: 48px; height: 40px; margin-left: 14px; background: #e4eff5; display: flex; align-items: center; justify-content: center; border-bottom: 2px solid #0078d7; }
.runbar { position: absolute; bottom: 0; height: 2px; background: #0078d7; }
.chromerun { left: 347px; width: 40px; }
.excelrun { left: 396px; width: 31px; }
.tray { position: absolute; left: 918px; top: 0; height: 40px; display: flex; align-items: center; font-size: 13px; color: #222; }
.temp { margin-left: 8px; }
.cond { margin-left: 9px; }
.chev { margin-left: 23px; }
.meet { margin-left: 9px; }
.batt { margin-left: 7px; }
.wifi { margin-left: 10px; }
.vol { margin-left: 7px; }
.eng { margin-left: 10px; font-size: 11.500px; }
.clock { width: 88px; margin-left: -2px; display: flex; flex-direction: column; align-items: center; gap: 4px; font-size: 11.500px; margin-top: -3px; }
.notify { position: relative; width: 25px; height: 24px; margin-left: 0; }
.notify b { position: absolute; left: 0; top: 2px; width: 16px; height: 13px; background: #000; }
.notify em { position: absolute; left: 7px; top: 6px; width: 16px; height: 16px; border-radius: 50%; background: #bcc6d0; border: 1px solid #666; font: 11px/14px "Open Sans", sans-serif; text-align: center; }

.handle { position: absolute; width: 9px; height: 9px; top: 370px; background: #fff; border: 1px solid #666; border-radius: 50%; }
.hleft { left: 19px; }
.hright { left: 1343px; }

/* floating format toolbar */
.minibar { position: absolute; left: 442px; top: 200px; width: 253px; height: 54px; background: #fff; border: 1px solid #d6d6d6; box-shadow: 1px 1px 3px #bbb; padding: 3px 2px; display: flex; flex-direction: column; gap: 1px; }
.minirow { display: grid; align-items: center; justify-items: center; }
.mini1 { height: 22px; grid-template-columns: 62px 43px 24px 20px 20px 10px 24px 20px 22px; }
.mini2 { height: 23px; grid-template-columns: 21px 22px 21px 24px 8px 24px 8px 24px 10px 22px 20px 22px; }
.miniactive { justify-self: stretch; align-self: stretch; background: #c6c6c6; display: flex; align-items: center; justify-content: center; }
.pct { font-size: 14px; color: #555; }
.comma { font-size: 14px; font-weight: 700; color: #555; line-height: 10px; }

/* right click menu */
.ctxmenu { position: absolute; left: 442px; top: 269px; width: 199px; height: 420px; overflow: hidden; background: #fff; border: 1px solid #d0d0d0; box-shadow: 1px 1px 3px #bbb; color: #505050; font-size: 11.300px; }
.mi { height: 23.200px; display: flex; align-items: center; position: relative; padding-left: 31px; white-space: nowrap; }
.mi svg { position: absolute; left: 5px; top: 3px; }
.mi u { text-underline-offset: 1px; }
.mi.sub::after { content: ""; position: absolute; right: 9px; top: 8px; border: 3.500px solid transparent; border-left: 4px solid #666; border-right: 0; }
.pastehead { margin-left: 24px; padding-left: 7px; margin-right: 1px; height: 21px; background: #ececec; font-weight: 700; color: #555; }
.pastehead svg { left: -19px; top: 3px; }
.pastebig { height: 29px; }
.pastebig svg { left: 29px; top: 3px; }
.ctxmenu hr { height: 2px; margin: 0 1px 0 31px; border: 0; background: #e8e8e8; }

.redarrow { position: absolute; left: 571px; top: 606px; }
```
